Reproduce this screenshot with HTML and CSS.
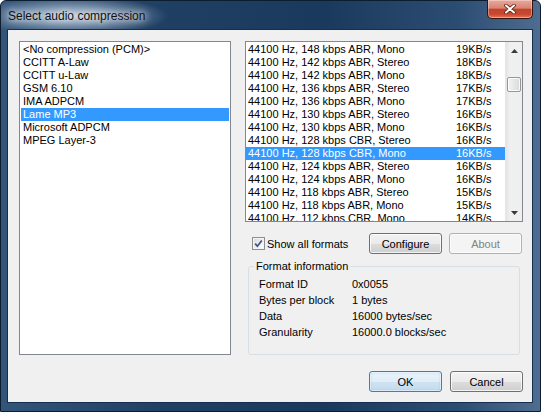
FILE: index.html
```html
<!DOCTYPE html>
<html>
<head>
<meta charset="utf-8">
<link rel="stylesheet" href="styles.css">
</head>
<body>
<div class="window">
  <div class="titlebar">
    <span class="title">Select audio compression</span>
    <div class="close">
      <svg width="12" height="10" viewBox="0 0 12 10"><path d="M2 1.5 L10 8.5 M10 1.5 L2 8.5" stroke="#5a1f14" stroke-width="3.6" stroke-linecap="round"/><path d="M2 1.5 L10 8.5 M10 1.5 L2 8.5" stroke="#ffffff" stroke-width="2" stroke-linecap="round"/></svg>
    </div>
  </div>
  <div class="client">
    <div class="main">
      <ul class="listbox codecs">
        <li>&lt;No compression (PCM)&gt;</li>
        <li>CCITT A-Law</li>
        <li>CCITT u-Law</li>
        <li>GSM 6.10</li>
        <li>IMA ADPCM</li>
        <li class="sel">Lame MP3</li>
        <li>Microsoft ADPCM</li>
        <li>MPEG Layer-3</li>
      </ul>
      <div class="right">
        <div class="listbox formats">
          <ul>
            <li><span>44100 Hz, 148 kbps ABR, Mono</span><span>19KB/s</span></li>
            <li><span>44100 Hz, 142 kbps ABR, Stereo</span><span>18KB/s</span></li>
            <li><span>44100 Hz, 142 kbps ABR, Mono</span><span>18KB/s</span></li>
            <li><span>44100 Hz, 136 kbps ABR, Stereo</span><span>17KB/s</span></li>
            <li><span>44100 Hz, 136 kbps ABR, Mono</span><span>17KB/s</span></li>
            <li><span>44100 Hz, 130 kbps ABR, Stereo</span><span>16KB/s</span></li>
            <li><span>44100 Hz, 130 kbps ABR, Mono</span><span>16KB/s</span></li>
            <li><span>44100 Hz, 128 kbps CBR, Stereo</span><span>16KB/s</span></li>
            <li class="sel"><span>44100 Hz, 128 kbps CBR, Mono</span><span>16KB/s</span></li>
            <li><span>44100 Hz, 124 kbps ABR, Stereo</span><span>16KB/s</span></li>
            <li><span>44100 Hz, 124 kbps ABR, Mono</span><span>16KB/s</span></li>
            <li><span>44100 Hz, 118 kbps ABR, Stereo</span><span>15KB/s</span></li>
            <li><span>44100 Hz, 118 kbps ABR, Mono</span><span>15KB/s</span></li>
            <li><span>44100 Hz, 112 kbps CBR, Mono</span><span>14KB/s</span></li>
          </ul>
          <div class="scrollbar">
            <div class="arrow"><svg width="7" height="4" viewBox="0 0 7 4"><path d="M0 4 L3.5 0 L7 4 Z" fill="#3a3a3a"/></svg></div>
            <div class="thumb"></div>
            <div class="arrow down"><svg width="7" height="4" viewBox="0 0 7 4"><path d="M0 0 L7 0 L3.5 4 Z" fill="#3a3a3a"/></svg></div>
          </div>
        </div>
        <div class="controls">
          <label class="check">
            <span class="box"><svg width="9" height="9" viewBox="0 0 9 9"><path d="M1.2 4.6 L3.4 7.2 L7.8 1.4" fill="none" stroke="#3d4f8f" stroke-width="1.7"/></svg></span>
            <span>Show all formats</span>
          </label>
          <button class="btn">Configure</button>
          <button class="btn disabled">About</button>
        </div>
        <fieldset class="group">
          <legend>Format information</legend>
          <div class="info">
            <span>Format ID</span><span>0x0055</span>
            <span>Bytes per block</span><span>1 bytes</span>
            <span>Data</span><span>16000 bytes/sec</span>
            <span>Granularity</span><span>16000.0 blocks/sec</span>
          </div>
        </fieldset>
      </div>
    </div>
    <div class="footer">
      <button class="btn default">OK</button>
      <button class="btn">Cancel</button>
    </div>
  </div>
</div>
</body>
</html>
```
FILE: styles.css
```css
* { box-sizing: border-box; }
html, body { margin: 0; padding: 0; }
body {
  width: 541px;
  height: 412px;
  overflow: hidden;
  background: #ffffff;
  font-family: "Liberation Sans", Arial, sans-serif;
  font-size: 11px;
  color: #000;
}
.window {
  width: 541px;
  height: 412px;
  display: flex;
  flex-direction: column;
  border: 1px solid #0c1d30;
  border-radius: 6px 6px 0 0;
  background:
    radial-gradient(ellipse 95px 20px at 72px 15px, rgba(205,220,235,0.9), rgba(205,220,235,0) 100%),
    linear-gradient(90deg, #34557a 0%, #1f3f63 30%, #1a3a5d 60%, #2c4d72 85%, #4e6d90 100%);
}
.titlebar {
  height: 28px;
  flex: none;
  display: flex;
  justify-content: space-between;
  align-items: flex-start;
  padding-left: 7px;
}
.title {
  align-self: center;
  font-size: 12px;
  color: #111;
  text-shadow: 0 0 6px #fff, 0 0 10px rgba(255,255,255,0.8);
  margin-top: 2px;
}
.close {
  width: 46px;
  height: 19px;
  margin-right: 7px;
  margin-top: -1px;
  display: flex;
  align-items: center;
  justify-content: center;
  border: 1px solid #3a1510;
  border-top: none;
  border-radius: 0 0 5px 5px;
  background: linear-gradient(#e7a99a 0%, #d98473 45%, #c2432c 52%, #c9492f 80%, #e27a57 100%);
  box-shadow: inset 0 0 0 1px rgba(255,255,255,0.35);
}
.client {
  flex: 1;
  margin: 0 7px 8px 6px;
  background: #f0f0f0;
  border: 1px solid #15304d;
  padding: 11px 9px 10px 11px;
  display: flex;
  flex-direction: column;
}
.main {
  display: flex;
  gap: 14px;
  height: 314px;
}
.listbox {
  background: #fff;
  border: 1px solid #828790;
}
.codecs {
  width: 212px;
  height: 314px;
  margin: 0;
  padding: 1px;
  list-style: none;
}
.codecs li {
  height: 13px;
  line-height: 13px;
  padding-left: 2px;
  white-space: nowrap;
}
.sel {
  background: #3399ff;
  color: #fff;
}
.right {
  width: 278px;
  display: flex;
  flex-direction: column;
}
.formats {
  height: 181px;
  display: flex;
  flex: none;
}
.formats ul {
  flex: 1;
  margin: 0;
  padding: 1px 0 0 0;
  list-style: none;
  overflow: hidden;
}
.formats li {
  display: grid;
  grid-template-columns: 208px auto;
  height: 13px;
  line-height: 13px;
  padding-left: 2px;
  white-space: nowrap;
}
.scrollbar {
  width: 17px;
  display: flex;
  flex-direction: column;
  background: linear-gradient(90deg, #e4e4e4 0%, #f0f0f0 25%, #efefef 100%);
  border-left: 1px solid #e6e6e6;
}
.arrow {
  height: 17px;
  display: flex;
  align-items: center;
  justify-content: center;
}
.arrow.down { margin-top: auto; }
.thumb {
  margin: 18px 1px 0 1px;
  height: 15px;
  border: 1px solid #979797;
  border-radius: 2px;
  background: linear-gradient(90deg, #f4f4f4, #e6e6e6 50%, #dadada);
  box-shadow: inset 0 0 0 1px rgba(255,255,255,0.8);
}
.controls {
  margin-top: 11px;
  height: 21px;
  flex: none;
  display: flex;
  align-items: center;
  gap: 7px;
  padding-right: 1px;
}
.check {
  flex: 1;
  display: flex;
  align-items: center;
  gap: 2px;
  padding-left: 7px;
}
.box {
  width: 13px;
  height: 13px;
  border: 1px solid #8e8f8f;
  background: linear-gradient(135deg, #d8d8d8, #f6f6f6 70%, #ffffff);
  box-shadow: inset 0 0 0 1px #f4f4f4;
  display: flex;
  align-items: center;
  justify-content: center;
}
.btn {
  width: 73px;
  height: 21px;
  padding: 0;
  font-family: "Liberation Sans", Arial, sans-serif;
  font-size: 11px;
  color: #000;
  border: 1px solid #707070;
  border-radius: 3px;
  background: linear-gradient(#f2f2f2 0%, #ebebeb 50%, #dddddd 51%, #cfcfcf 100%);
  box-shadow: inset 0 0 0 1px rgba(255,255,255,0.75);
}
.btn.default {
  border-color: #3c7fb1;
  background: linear-gradient(#eaf3fa 0%, #e0edf7 50%, #cfe3f2 51%, #c3dbee 100%);
  box-shadow: inset 0 0 0 1px rgba(255,255,255,0.6), inset 0 0 2px 1px rgba(80,170,230,0.35);
}
.btn.disabled {
  border-color: #adb2b5;
  background: #f4f4f4;
  color: #838383;
}
.group {
  flex: 1;
  margin: 6px 3px 0 3px;
  padding: 0;
  border: 1px solid #d5dfe5;
  border-radius: 3px;
  min-width: 0;
}
.group legend {
  margin-left: 5px;
  padding: 0 2px;
  line-height: 13px;
}
.info {
  display: grid;
  grid-template-columns: 93px auto;
  line-height: 16px;
  padding: 3px 0 0 10px;
}
.footer {
  margin-top: 16px;
  display: flex;
  justify-content: flex-end;
  gap: 8px;
}
```
